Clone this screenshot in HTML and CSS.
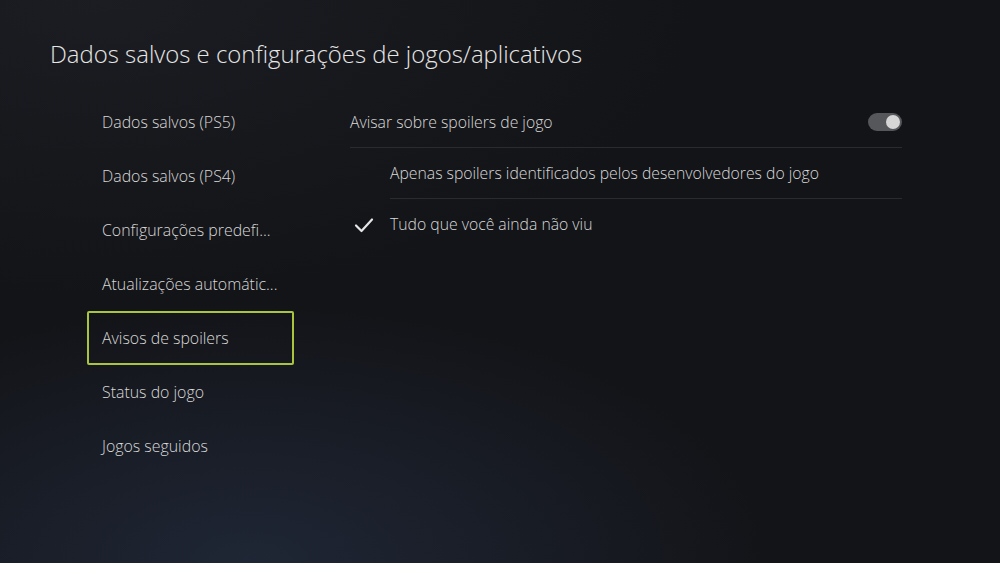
FILE: index.html
```html
<!DOCTYPE html>
<html lang="pt">
<head>
<meta charset="utf-8">
<link rel="stylesheet" href="styles.css">
</head>
<body>
<div class="screen">
  <h1 class="title">Dados salvos e configurações de jogos/aplicativos</h1>
  <div class="main">
    <nav class="nav">
      <div class="nav-item">Dados salvos (PS5)</div>
      <div class="nav-item">Dados salvos (PS4)</div>
      <div class="nav-item">Configurações predefi...</div>
      <div class="nav-item">Atualizações automátic...</div>
      <div class="nav-item focused">Avisos de spoilers</div>
      <div class="nav-item">Status do jogo</div>
      <div class="nav-item">Jogos seguidos</div>
    </nav>
    <section class="panel">
      <div class="row toggle-row">
        <span class="row-label">Avisar sobre spoilers de jogo</span>
        <span class="toggle"><span class="knob"></span></span>
      </div>
      <div class="opt">
        <span class="slot"></span>
        <span class="opt-body">Apenas spoilers identificados pelos desenvolvedores do jogo</span>
      </div>
      <div class="opt last">
        <span class="slot">
          <svg class="check" width="20" height="16" viewBox="0 0 20 16"><path d="M2 8.5 L7.5 14 L18 2.5" fill="none" stroke="#e6e6e6" stroke-width="2.2" stroke-linecap="round" stroke-linejoin="round"/></svg>
        </span>
        <span class="opt-body">Tudo que você ainda não viu</span>
      </div>
    </section>
  </div>
</div>
</body>
</html>
```
FILE: styles.css
```css
html, body {
  margin: 0;
  padding: 0;
}
body {
  width: 1000px;
  height: 563px;
  overflow: hidden;
  font-family: "Open Sans", "Noto Sans", sans-serif;
  font-weight: 300;
  color: #d8d8d8;
  background-color: #131418;
  background-image:
    radial-gradient(ellipse 520px 260px at 25% 100%, rgba(32, 40, 56, 0.9), rgba(32, 40, 56, 0) 100%),
    radial-gradient(ellipse 600px 300px at 10% 0%, rgba(30, 31, 36, 0.8), rgba(30, 31, 36, 0) 100%);
}
.screen {
  padding: 38px 0 0 50px;
}
.title {
  margin: 0;
  font-size: 23.9px;
  font-weight: 300;
  line-height: 32px;
  color: #e6e6e6;
}
.main {
  display: flex;
  margin-top: 25px;
  margin-left: 37px;
}
.nav {
  width: 207px;
  display: flex;
  flex-direction: column;
}
.nav-item {
  height: 54px;
  box-sizing: border-box;
  display: flex;
  align-items: center;
  padding-left: 15px;
  font-size: 15.9px;
  color: #d8d8d8;
  white-space: nowrap;
}
.nav-item.focused {
  border: 2px solid #a9c53e;
  border-radius: 2px;
  padding-left: 13px;
}
.panel {
  margin-left: 56px;
  width: 552px;
  margin-top: 2px;
}
.row {
  height: 50px;
  display: flex;
  align-items: center;
  justify-content: space-between;
  border-bottom: 1px solid #2a2b30;
  font-size: 15.75px;
  color: #d8d8d8;
}
.toggle {
  width: 34px;
  height: 18px;
  border-radius: 9px;
  background: #56575b;
  display: flex;
  align-items: center;
  justify-content: flex-end;
  padding: 0 2px;
  box-sizing: border-box;
}
.knob {
  width: 14px;
  height: 14px;
  border-radius: 50%;
  background: #d6d6d6;
}
.opt {
  display: flex;
  height: 51px;
}
.slot {
  width: 40px;
  display: flex;
  align-items: center;
  padding-left: 4px;
  box-sizing: border-box;
}
.opt-body {
  flex: 1;
  display: flex;
  align-items: center;
  border-bottom: 1px solid #2a2b30;
  font-size: 15.75px;
  color: #d8d8d8;
  padding-bottom: 1px;
}
.opt.last .opt-body {
  border-bottom: none;
}
.check {
  display: block;
}
```
